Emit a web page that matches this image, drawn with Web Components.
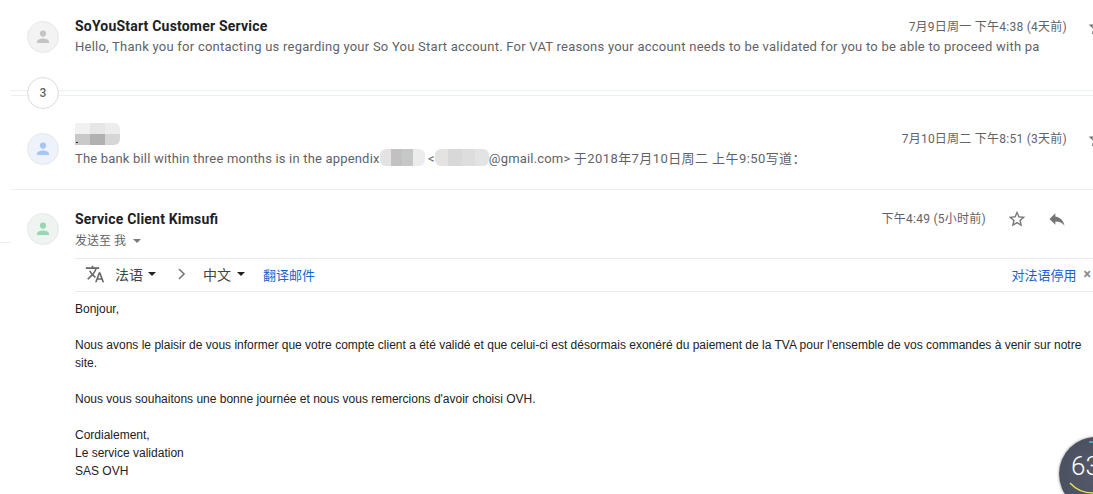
<!DOCTYPE html>
<html lang="zh">
<head>
<meta charset="utf-8">
<title>Mail thread</title>
<style>
  html, body { margin: 0; height: 100%; background: #fff; }
  body { width: 1093px; height: 494px; overflow: hidden; position: relative; font-family: Roboto, "Noto Sans CJK SC", sans-serif; }
  .edge { position: absolute; left: 0; top: 242px; width: 11px; height: 1px; background: #eee; }
  .tight { letter-spacing: .18px; }
  .wide { letter-spacing: .42px; }
</style>
</head>
<body>
<div class="edge"></div>
<mail-thread>
  <mail-row tone="grey" height="90" top="17">
    <span slot="name">SoYouStart Customer Service</span>
    <span slot="time">7月9日周一 下午4:38 (4天前)</span>
    <span>Hello, Thank you for contacting us regarding your So You Start account. For VAT reasons your account needs to be validated for you to be able to proceed with pa</span>
  </mail-row>
  <thread-count>3</thread-count>
  <mail-row tone="blue" height="100" top="39" divided>
    <pixel-blur slot="name" colors="#f1f1f1,#e6e6e6,#ececec;#c9c9c9,#b1b1b1,#d6d6d6" cell="15,11" dot></pixel-blur>
    <span slot="time">7月10日周二 下午8:51 (3天前)</span>
    <span class="tight">The bank bill within three months is in the appendix<pixel-blur colors="#e3e3e3,#c2c0c0,#c6c8c8,#ececec" cell="11.25,17"></pixel-blur> &lt;<pixel-blur colors="#e4e3e1,#d8d8d8,#dddddd,#e2e4e4" cell="13.5,17"></pixel-blur>@gmail.com&gt; <span class="wide">于2018年7月10日周二 上午9:50写道：</span></span>
  </mail-row>
  <mail-open></mail-open>
</mail-thread>
<speed-gauge>63</speed-gauge>

<script>
const STAR = `<svg width="20" height="20" viewBox="0 0 24 24"><path fill="#757575" d="M22 9.24l-7.19-.62L12 2 9.19 8.63 2 9.24l5.46 4.73L5.82 21 12 17.27 18.18 21l-1.63-7.03L22 9.24zM12 15.4l-3.76 2.27 1-4.28-3.32-2.88 4.38-.38L12 6.1l1.71 4.04 4.38.38-3.32 2.88 1 4.28L12 15.4z"/></svg>`;
const REPLY = `<svg width="20" height="20" viewBox="0 0 24 24"><path fill="#757575" d="M10 9V5l-7 7 7 7v-4.1c5 0 8.5 1.6 11 5.1-1-5-4-10-11-11z"/></svg>`;
const TONES = {
  grey: { bg: "#f3f3f3", fg: "#c4c4c4" },
  blue: { bg: "#eef2fb", fg: "#a8c4f4" },
  green: { bg: "#eff4f1", fg: "#93d7b5" }
};

class MailAvatar extends HTMLElement {
  connectedCallback() {
    const tone = TONES[this.getAttribute("tone")] || TONES.grey;
    this.attachShadow({ mode: "open" }).innerHTML = `
      <style>
        :host { display: flex; align-items: center; justify-content: center; width: 32px; height: 32px; margin-top: 4px; box-sizing: border-box; border-radius: 50%; flex: none; background: ${tone.bg}; border: 1px solid #e6e8ea; }
      </style>
      <svg width="14" height="14" viewBox="0 0 14 14"><circle cx="7" cy="3.6" r="3.1" fill="${tone.fg}"/><path fill="${tone.fg}" d="M1 13v-1.4C1 9.4 4.6 8.4 7 8.4s6 1 6 3.2V13z"/></svg>`;
  }
}

class MailRow extends HTMLElement {
  connectedCallback() {
    const tone = this.getAttribute("tone");
    this.attachShadow({ mode: "open" }).innerHTML = `
      <style>
        :host { display: flex; box-sizing: border-box; gap: 16px; padding: ${this.getAttribute("top")}px 0 0 16px; height: ${this.getAttribute("height")}px; overflow: hidden; font-size: 13px; color: #5f6368; }
        :host([divided]) { border-bottom: 1px solid #eceff1; }
        .main { flex: 1; min-width: 0; }
        .head { display: flex; align-items: flex-start; height: 20px; }
        ::slotted([slot="name"]) { font-weight: 700; font-size: 14px; letter-spacing: .2px; color: #202124; line-height: 18px; }
        ::slotted(pixel-blur[slot="name"]) { margin-top: -6px; }
        .time { margin-left: auto; font-size: 12px; line-height: 20px; letter-spacing: .25px; white-space: nowrap; }
        .star { margin-left: 20px; margin-right: -14px; width: 20px; height: 20px; flex: none; }
        .text { white-space: nowrap; line-height: 20px; letter-spacing: .24px; }
      </style>
      <mail-avatar tone="${tone}"></mail-avatar>
      <div class="main">
        <div class="head"><slot name="name"></slot><span class="time"><slot name="time"></slot></span><span class="star">${STAR}</span></div>
        <div class="text"><slot></slot></div>
      </div>`;
  }
}

class ThreadCount extends HTMLElement {
  constructor() {
    super();
    this.attachShadow({ mode: "open" }).innerHTML = `
      <style>
        :host { display: block; height: 0; position: relative; }
        .lines { position: absolute; top: 0; left: 0; right: 0; height: 6px; border-top: 1px solid #eceff1; border-bottom: 1px solid #eceff1; box-sizing: border-box; }
        .badge { position: absolute; left: 16px; top: -13px; width: 32px; height: 32px; box-sizing: border-box; border: 1px solid #dadce0; border-radius: 50%; background: #fff; display: flex; align-items: center; justify-content: center; font-size: 12px; font-weight: 500; color: #5f6368; }
      </style>
      <div class="lines"></div>
      <div class="badge"><slot></slot></div>`;
  }
}

class PixelBlur extends HTMLElement {
  connectedCallback() {
    const rows = this.getAttribute("colors").split(";").map(r => r.split(","));
    const [w, h] = this.getAttribute("cell").split(",").map(Number);
    const cells = rows.flat().map(c => `<i style="background:${c}"></i>`).join("");
    this.attachShadow({ mode: "open" }).innerHTML = `
      <style>
        :host { display: inline-grid; position: relative; vertical-align: top; grid-template-columns: repeat(${rows[0].length}, ${w}px); grid-auto-rows: ${h}px; border-radius: 6px; overflow: hidden; }
        :host([slot="name"]) { border-radius: 0 6px 6px 0; }
        b { position: absolute; left: 1px; top: 19px; width: 2px; height: 1px; background: #222; }
      </style>${cells}${this.hasAttribute("dot") ? "<b></b>" : ""}`;
  }
}

class TranslateBar extends HTMLElement {
  constructor() {
    super();
    this.attachShadow({ mode: "open" }).innerHTML = `
      <style>
        :host { display: flex; align-items: center; box-sizing: border-box; height: 34px; padding-bottom: 2px; border-top: 1px solid #e8eaed; border-bottom: 1px solid #e8eaed; font-size: 13px; color: #444; }
        svg { flex: none; }
        .globe { margin-left: 10px; margin-right: 10px; }
        .lang { display: inline-flex; align-items: center; gap: 5px; font-size: 14px; }
        .lang + .chev + .lang { gap: 6px; }
        .caret { width: 0; height: 0; border: 4.5px solid transparent; border-top: 4.5px solid #222; border-bottom: 0; }
        .chev { margin: 0 17px 0 22px; }
        a { color: #1a5fd0; }
        .link { margin-left: 18px; }
        .off { margin-left: auto; }
        .x { margin: 0 2px 0 7px; color: #8a8a8a; font-size: 14px; font-weight: 700; line-height: 1; }
      </style>
      <svg class="globe" width="20" height="20" viewBox="0 0 24 24"><path fill="#666" d="M12.87 15.07l-2.54-2.51.03-.03c1.74-1.94 2.98-4.17 3.71-6.53H17V4h-7V2H8v2H1v1.99h11.17C11.5 7.92 10.44 9.75 9 11.35 8.07 10.32 7.3 9.19 6.69 8h-2c.73 1.63 1.73 3.17 2.98 4.56l-5.09 5.02L4 19l5-5 3.11 3.11.76-2.04zM18.5 10h-2L12 22h2l1.12-3h4.75L21 22h2l-4.5-12zm-2.62 7l1.62-4.33L19.12 17h-3.24z"/></svg>
      <span class="lang">法语<span class="caret"></span></span>
      <svg class="chev" width="8" height="12" viewBox="0 0 8 12"><path d="M1 1l5 5-5 5" fill="none" stroke="#777" stroke-width="1.6"/></svg>
      <span class="lang">中文<span class="caret"></span></span>
      <a class="link">翻译邮件</a>
      <a class="off">对法语停用</a>
      <span class="x">×</span>`;
  }
}

class MailOpen extends HTMLElement {
  constructor() {
    super();
    this.attachShadow({ mode: "open" }).innerHTML = `
      <style>
        :host { display: flex; gap: 16px; padding: 19px 0 0 16px; color: #5f6368; }
        mail-avatar { align-self: flex-start; }
        .main { flex: 1; min-width: 0; }
        .head { display: flex; align-items: flex-start; height: 49px; }
        .name { font-weight: 700; font-size: 14px; letter-spacing: .2px; color: #202124; line-height: 20px; }
        .name span { letter-spacing: 0; }
        .to { font-size: 12px; line-height: 22px; margin-top: 1px; display: flex; align-items: center; gap: 7px; }
        .caret { width: 0; height: 0; border: 4px solid transparent; border-top: 4px solid #7a7a7a; border-bottom: 0; }
        .time { margin-left: auto; font-size: 12px; line-height: 20px; letter-spacing: .25px; }
        .act { display: flex; gap: 20px; margin-left: 21px; margin-right: 26px; }
        .body { font: 12px/18px "Liberation Sans", Arial, sans-serif; color: #222; padding-top: 8px; width: 1012px; }
        p { margin: 0 0 18px; }
      </style>
      <mail-avatar tone="green"></mail-avatar>
      <div class="main">
        <div class="head">
          <div><div class="name">Service Client Kimsu<span>fi</span></div><div class="to">发送至 我 <span class="caret"></span></div></div>
          <span class="time">下午4:49 (5小时前)</span>
          <span class="act">${STAR}${REPLY}</span>
        </div>
        <translate-bar></translate-bar>
        <div class="body">
          <p>Bonjour,</p>
          <p>Nous avons le plaisir de vous informer que votre compte client a été validé et que celui-ci est désormais exonéré du paiement de la TVA pour l'ensemble de vos commandes à venir sur notre site.</p>
          <p>Nous vous souhaitons une bonne journée et nous vous remercions d'avoir choisi OVH.</p>
          <p>Cordialement,<br>Le service validation<br>SAS OVH</p>
        </div>
      </div>`;
  }
}

class MailThread extends HTMLElement {
  constructor() {
    super();
    this.attachShadow({ mode: "open" }).innerHTML = `
      <style>:host { display: block; margin-left: 11px; width: 1082px; }</style>
      <slot></slot>`;
  }
}

class SpeedGauge extends HTMLElement {
  constructor() {
    super();
    this.attachShadow({ mode: "open" }).innerHTML = `
      <style>
        :host { position: absolute; left: 1059px; top: 437px; width: 74px; height: 74px; border-radius: 50%; background: radial-gradient(circle at 50% 50%, #545a6b, #484d5c); box-shadow: 0 0 3px rgba(0,0,0,.45); color: #fff; font: 300 26px/74px Roboto, sans-serif; overflow: hidden; }
        span { position: absolute; left: 12px; top: -8px; }
        svg { position: absolute; left: 0; top: 0; }
      </style>
      <svg width="74" height="74"><path d="M11 46Q20 56 34 56" fill="none" stroke="#e8d95a" stroke-width="1.5"/><path d="M30 5h6" stroke="#3fc6c4" stroke-width="1.5"/></svg>
      <span><slot></slot></span>`;
  }
}

customElements.define("mail-avatar", MailAvatar);
customElements.define("mail-row", MailRow);
customElements.define("thread-count", ThreadCount);
customElements.define("pixel-blur", PixelBlur);
customElements.define("translate-bar", TranslateBar);
customElements.define("mail-open", MailOpen);
customElements.define("mail-thread", MailThread);
customElements.define("speed-gauge", SpeedGauge);
</script>
</body>
</html>
